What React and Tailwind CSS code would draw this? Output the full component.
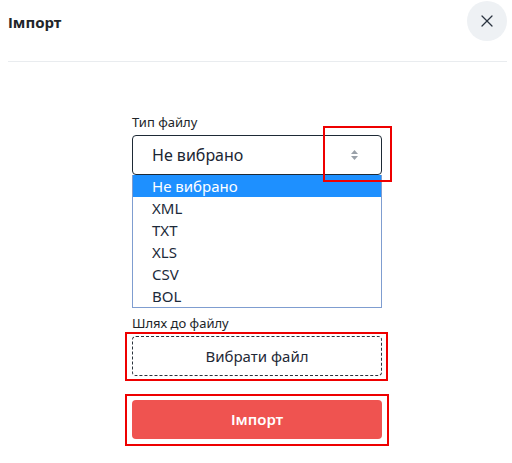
import { X } from "lucide-react"

const options = ["Не вибрано", "XML", "TXT", "XLS", "CSV", "BOL"]

export default function App() {
  return (
    <div className="w-[512px] h-[463px] bg-white text-[#212529] font-['Noto_Sans',sans-serif] overflow-hidden">
      {/* header */}
      <div className="flex items-start justify-between ml-2 mr-[5px] h-[62px] border-b border-[#e9ecef]">
        <h2 className="mt-[11px] text-[15px] font-bold leading-[22px] text-[#212529]">Імпорт</h2>
        <button className="mt-[1px] flex items-center justify-center w-[40px] h-[40px] rounded-full bg-[#eef1f4] text-[#2b3440]">
          <X size={20} strokeWidth={1.5} />
        </button>
      </div>

      <div className="ml-[132px] w-[250px] pt-[51px] flex flex-col">
        <label className="text-[13px] leading-[18px] mb-[4px]">Тип файлу</label>

        <div className="relative">
          <div className="flex items-center justify-between h-[40px] pl-[19px] pr-[22px] border border-[#1e2a36] rounded-[4px] text-[16px] text-[#1b2634]">
            <span>Не вибрано</span>
            <svg width="9" height="12" viewBox="0 0 9 12" className="text-[#9aa1a9]">
              <path d="M4.5 1 L8 5 L1 5 Z" fill="currentColor" />
              <path d="M4.5 11 L8 7 L1 7 Z" fill="currentColor" />
            </svg>
          </div>
          {/* annotation */}
          <div className="absolute left-[191px] top-[-9px] w-[69px] h-[56px] border-2 border-[#ee0000]" />
        </div>

        <ul className="border-x border-b border-[#7f9dd0] text-[15px] text-[#1c2a3a]">
          {options.map((o, i) => (
            <li
              key={o}
              className={`h-[22px] leading-[22px] pl-[19px] ${i === 0 ? "bg-[#1e90ff] text-white" : ""}`}
            >
              {o}
            </li>
          ))}
        </ul>

        <label className="mt-[6px] text-[13px] leading-[18px] mb-[4px]">Шлях до файлу</label>

        <div className="relative">
          <button className="w-full h-[40px] border border-dashed border-[#2a323c] rounded-[4px] text-[15px] text-[#1f2a37]">
            Вибрати файл
          </button>
          <div className="absolute left-[-7px] right-[-6px] top-[-4px] bottom-[-5px] border-2 border-[#ee0000]" />
        </div>

        <div className="relative mt-[24px]">
          <button className="w-full h-[39px] rounded-[4px] bg-[#ef5350] text-white text-[15px] font-semibold">
            Імпорт
          </button>
          <div className="absolute left-[-7px] right-[-7px] top-[-6px] bottom-[-7px] border-2 border-[#ee0000]" />
        </div>
      </div>
    </div>
  )
}
